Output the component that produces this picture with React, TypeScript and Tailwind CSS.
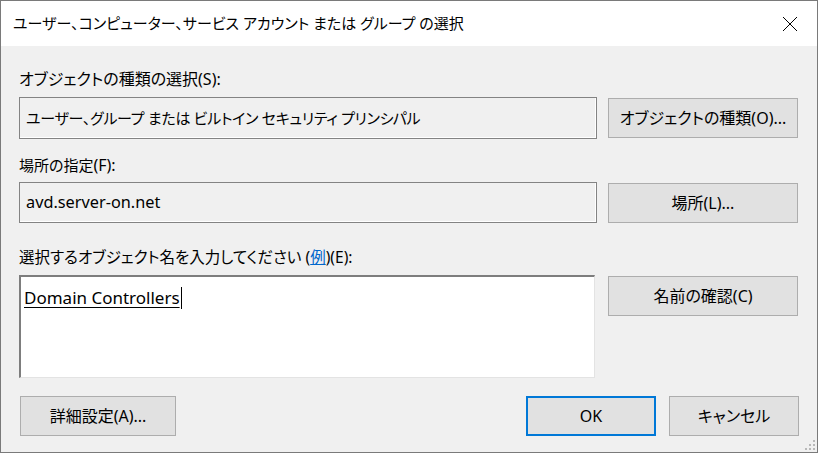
import React from 'react';

const FONT = "font-['Noto_Sans','Noto_Sans_CJK_JP',sans-serif] [font-feature-settings:'palt']";

function Btn({ children, primary = false, className = '' }: { children: React.ReactNode; primary?: boolean; className?: string }) {
  return (
    <button
      type="button"
      className={`flex h-[40px] items-center justify-center bg-[#e1e1e1] text-[16px] text-black ${
        primary ? 'border-2 border-[#0078d7]' : 'border border-[#adadad]'
      } ${className}`}
    >
      {children}
    </button>
  );
}

function Field({ children, h = 'h-[42px]', text = 'text-[16px]' }: { children: React.ReactNode; h?: string; text?: string }) {
  return (
    <div className={`flex ${h} items-center border border-[#838383] bg-[#f0f0f0] pl-[6px] ${text} shadow-[inset_-1px_-1px_0_#ffffff]`}>
      {children}
    </div>
  );
}

export default function App() {
  return (
    <div className={`flex h-[453px] w-[818px] flex-col border border-[#7a7a7a] bg-[#f0f0f0] text-black ${FONT}`}>
      {/* title bar */}
      <div className="flex h-[45px] items-center justify-between bg-white pl-[12px] pr-[19px]">
        <span className="text-[15px] leading-none">ユーザー、コンピューター、サービス アカウント または グループ の選択</span>
        <svg width="16" height="16" viewBox="0 0 16 16" className="mt-[1px]">
          <path d="M1 1 L15 15 M15 1 L1 15" stroke="#000" strokeWidth="1" />
        </svg>
      </div>

      {/* body */}
      <div className="relative flex-1 pl-[18px] pr-[18px]">
        <div className="grid grid-cols-[578px_190px] gap-x-[11px]">
          <div className="col-span-2 mt-[23px] h-[20px] text-[16px] leading-[20px]">オブジェクトの種類の選択(S):</div>
          <div className="mt-[8px]">
            <Field text="text-[15px] tracking-[-0.3px]">ユーザー、グループ または ビルトイン セキュリティ プリンシパル</Field>
          </div>
          <div className="mt-[9px]">
            <Btn className="w-full">オブジェクトの種類(O)...</Btn>
          </div>

          <div className="col-span-2 mt-[16px] h-[20px] text-[15px] leading-[20px]">
            場所の指定<span className="text-[16px]">(F):</span>
          </div>
          <div className="mt-[7px]">
            <Field h="h-[41px]" text="text-[16.3px]">avd.server-on.net</Field>
          </div>
          <div className="mt-[8px]">
            <Btn className="w-full">場所(L)...</Btn>
          </div>

          <div className="col-span-2 mt-[24px] h-[20px] text-[15.5px] leading-[20px]">
            選択するオブジェクト名を入力してください (<span className="text-[#0066cc] underline">例</span>)(E):
          </div>
          <div className="mt-[8px]">
            <div className="h-[103px] w-[576px] border-l-2 border-t-2 border-b border-r border-l-[#7d7d7d] border-t-[#7d7d7d] border-b-[#e3e3e3] border-r-[#e3e3e3] bg-white pl-[3px] pt-[10px]">
              <div className="flex items-center">
                <span className="text-[17px] leading-[22px] underline underline-offset-[3px]">Domain Controllers</span>
                <span className="ml-[1px] h-[22px] w-[1px] bg-black" />
              </div>
            </div>
          </div>
          <div className="mt-[9px]">
            <Btn className="w-full">名前の確認(C)</Btn>
          </div>
        </div>

        <div className="mt-[18px] flex items-center">
          <Btn className="ml-[1px] w-[156px]">詳細設定(A)...</Btn>
          <div className="flex-1" />
          <Btn primary className="w-[130px]">OK</Btn>
          <Btn className="ml-[13px] w-[130px]">キャンセル</Btn>
        </div>

        {/* size grip */}
        <svg width="10" height="10" viewBox="0 0 10 10" className="absolute bottom-[2px] right-[2px]">
          <rect x="8" y="0" width="2" height="2" fill="#b8b8b8" />
          <rect x="4" y="4" width="2" height="2" fill="#b8b8b8" />
          <rect x="8" y="4" width="2" height="2" fill="#b8b8b8" />
          <rect x="0" y="8" width="2" height="2" fill="#b8b8b8" />
          <rect x="4" y="8" width="2" height="2" fill="#b8b8b8" />
          <rect x="8" y="8" width="2" height="2" fill="#b8b8b8" />
        </svg>
      </div>
    </div>
  );
}
